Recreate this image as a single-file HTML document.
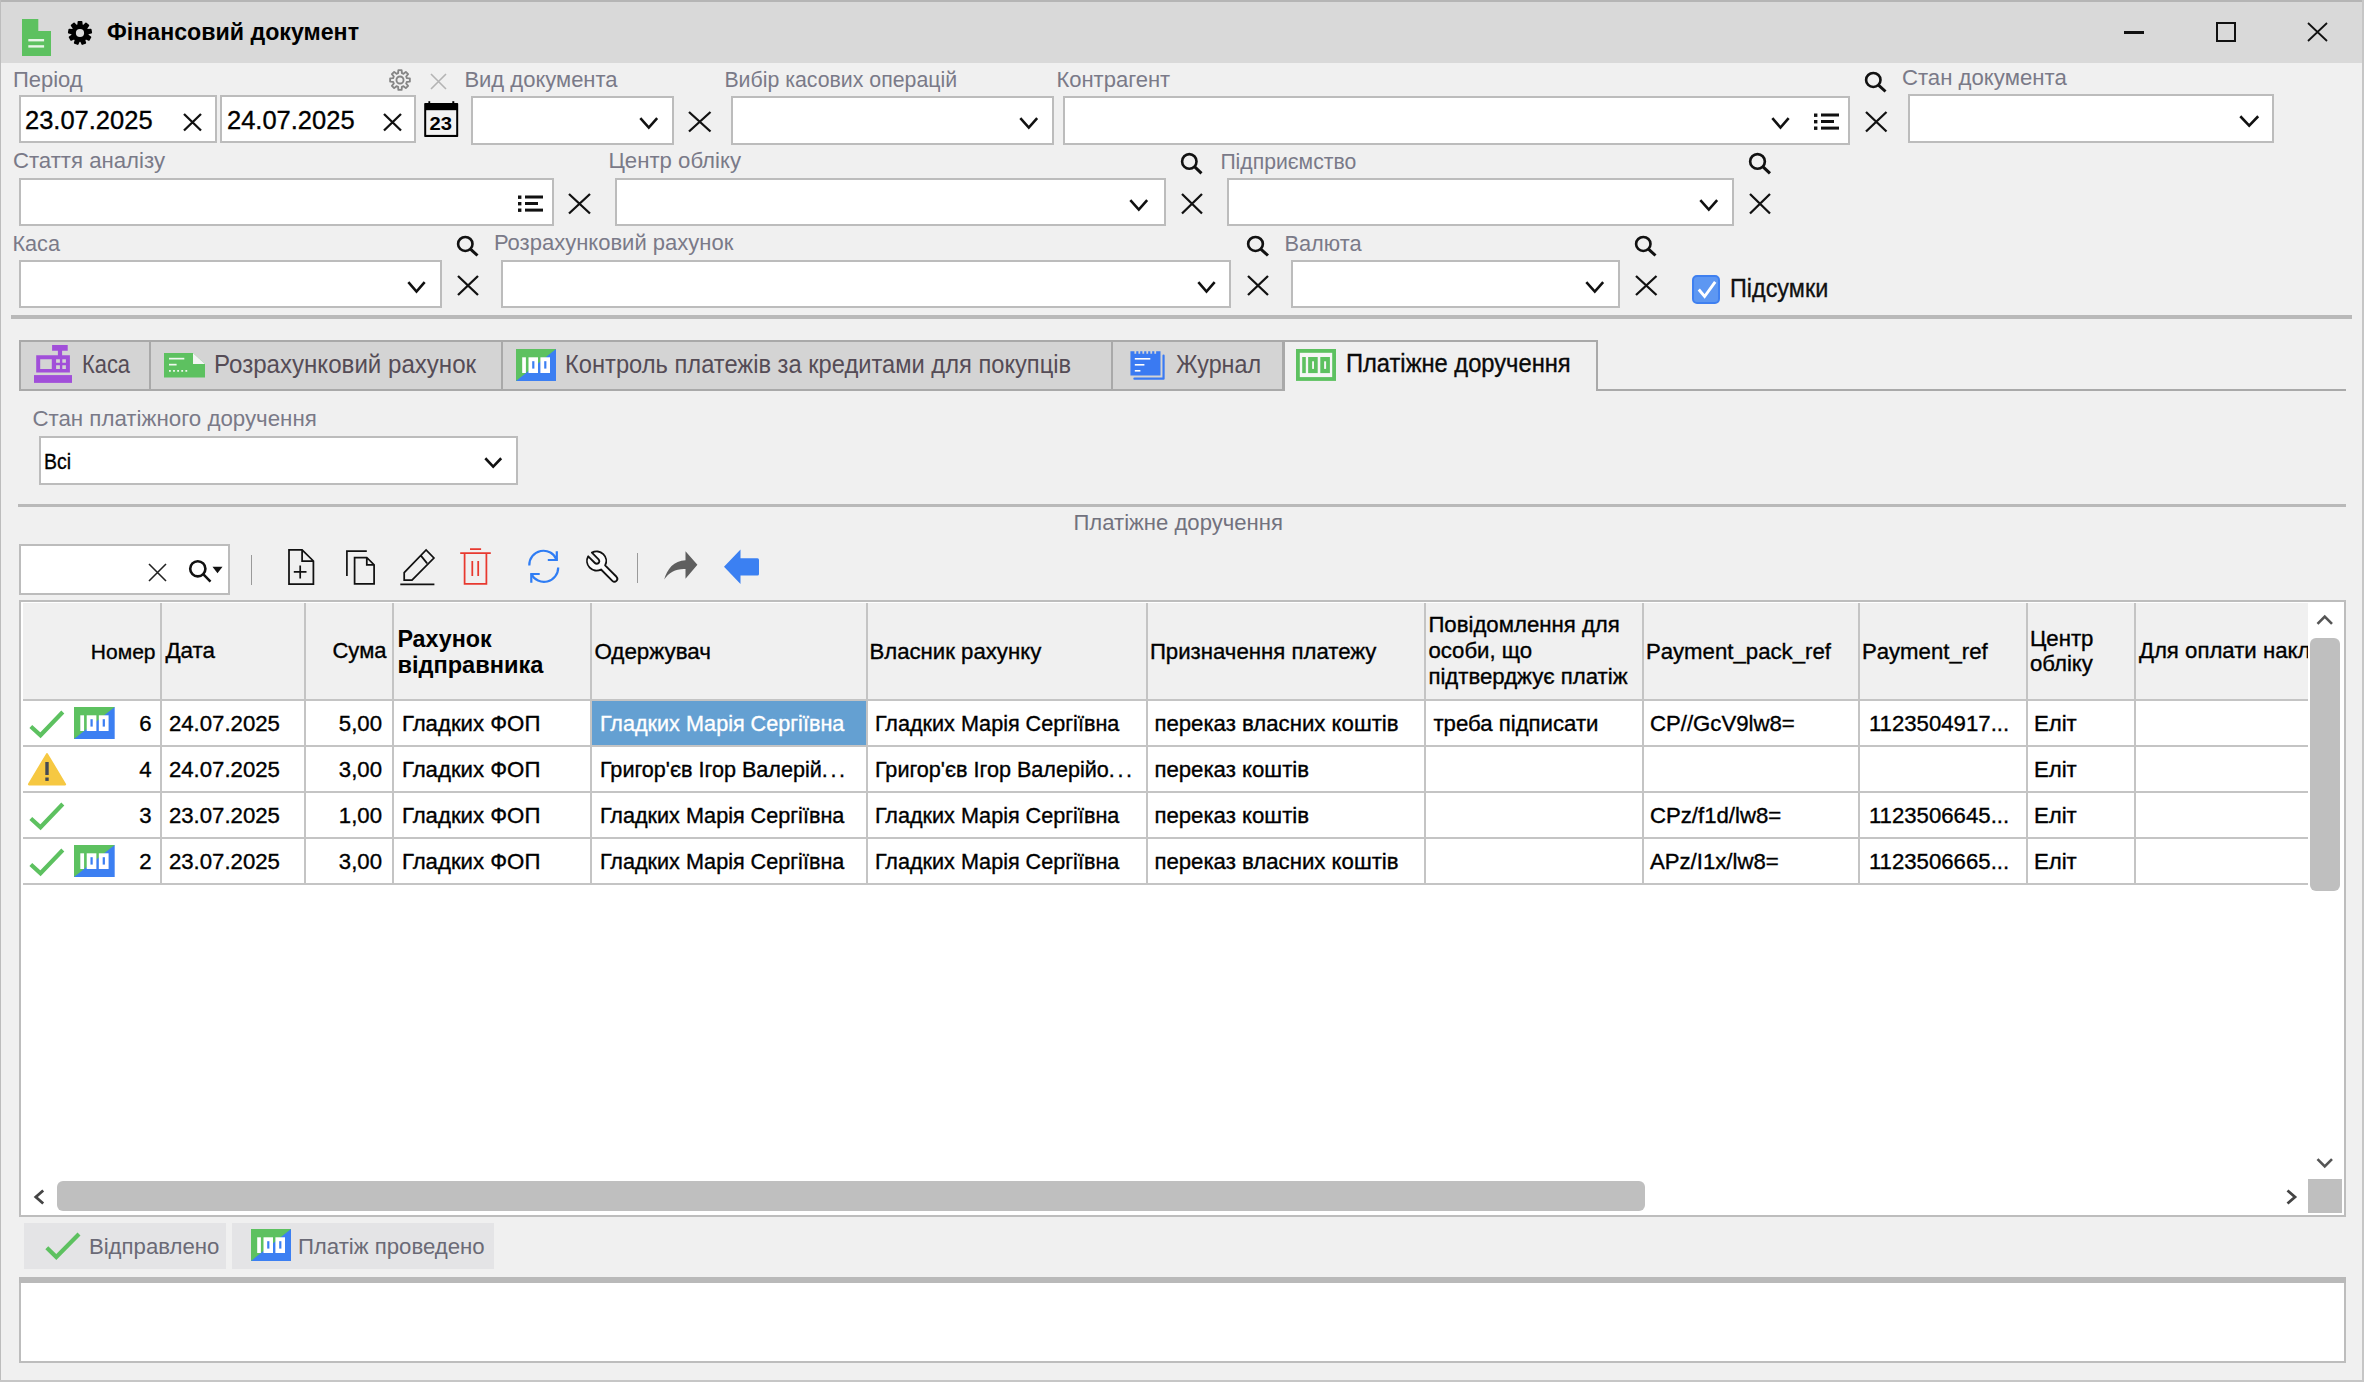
<!DOCTYPE html>
<html><head><meta charset="utf-8"><style>
html,body{margin:0;padding:0;}
body{width:2364px;height:1382px;overflow:hidden;position:relative;background:#f0f0f0;font-family:"Liberation Sans",sans-serif;}
.t{position:absolute;white-space:nowrap;line-height:1;}
.k{-webkit-text-stroke:0.35px currentColor;}
.k2{-webkit-text-stroke:0.15px currentColor;}
.b{position:absolute;box-sizing:border-box;}
svg.b{overflow:visible;}
</style></head><body>

<div class="b" style="left:0.0px;top:0.0px;width:2364.0px;height:63.0px;background:#d9d9d9;"></div>
<div class="b" style="left:0.0px;top:0.0px;width:2364.0px;height:2.0px;background:#b5b5b5;"></div>
<div class="b" style="left:0.0px;top:0.0px;width:1.2px;height:1382.0px;background:#bdbdbd;"></div>
<div class="b" style="left:2362.0px;top:0.0px;width:2.0px;height:1382.0px;background:#c6c6c6;"></div>
<div class="b" style="left:0.0px;top:1380.0px;width:2364.0px;height:2.0px;background:#c6c6c6;"></div>
<svg class="b" style="left:22.0px;top:19.0px;" width="29.0" height="37.0" viewBox="0 0 29 37" preserveAspectRatio="none"><path d="M0 0H16.3V12H29V37H0Z" fill="#5dc160"/><rect x="6.3" y="20" width="15.8" height="2.4" fill="#e8f5e8"/><rect x="6.3" y="26.2" width="15.8" height="2.4" fill="#e8f5e8"/></svg>
<svg class="b" style="left:67.0px;top:20.0px;" width="26.0" height="26.0" viewBox="0 0 26 26" preserveAspectRatio="none"><path d="M11.10 5.23 L11.38 1.82 L14.62 1.82 L14.90 5.23 L16.54 5.83 L18.95 3.39 L21.43 5.48 L19.45 8.27 L20.32 9.78 L23.73 9.46 L24.29 12.65 L20.98 13.52 L20.68 15.24 L23.50 17.19 L21.87 20.00 L18.78 18.53 L17.44 19.65 L18.35 22.95 L15.30 24.06 L13.87 20.95 L12.13 20.95 L10.70 24.06 L7.65 22.95 L8.56 19.65 L7.22 18.53 L4.13 20.00 L2.50 17.19 L5.32 15.24 L5.02 13.52 L1.71 12.65 L2.27 9.46 L5.68 9.78 L6.55 8.27 L4.57 5.48 L7.05 3.39 L9.46 5.83Z" fill="#000" stroke="#000" stroke-width="1.6" stroke-linejoin="round"/><circle cx="13" cy="13" r="8.4" fill="#000"/><circle cx="13" cy="13" r="4.1" fill="#dcdcdc"/></svg>
<div class="t" style="left:107.4px;top:20.2px;font-size:24.3px;color:#000;font-weight:bold;transform:scaleX(0.9547);transform-origin:left center;">Фінансовий документ</div>
<div class="b" style="left:2124.0px;top:31.0px;width:20.0px;height:2.5px;background:#111;"></div>
<div class="b" style="left:2216.0px;top:21.5px;width:20.0px;height:20.0px;border:2.2px solid #111;"></div>
<svg class="b" style="left:2307.0px;top:21.5px;" width="21.0" height="20.0" viewBox="0 0 21.0 20.0" preserveAspectRatio="none"><path d="M1 1L20.0 19.0M20.0 1L1 19.0" stroke="#111" stroke-width="1.8" fill="none"/></svg>
<div class="t" style="left:12.9px;top:68.9px;font-size:22px;color:#7a7a88;font-weight:normal;">Період</div>
<svg class="b" style="left:388.5px;top:69.0px;" width="22.0" height="22.0" viewBox="0 0 26 26" preserveAspectRatio="none"><path d="M21.10 10.76 L24.65 11.10 L24.65 14.90 L21.10 15.24 L20.31 17.14 L22.58 19.89 L19.89 22.58 L17.14 20.31 L15.24 21.10 L14.90 24.65 L11.10 24.65 L10.76 21.10 L8.86 20.31 L6.11 22.58 L3.42 19.89 L5.69 17.14 L4.90 15.24 L1.35 14.90 L1.35 11.10 L4.90 10.76 L5.69 8.86 L3.42 6.11 L6.11 3.42 L8.86 5.69 L10.76 4.90 L11.10 1.35 L14.90 1.35 L15.24 4.90 L17.14 5.69 L19.89 3.42 L22.58 6.11 L20.31 8.86Z" fill="#f0f0f0" stroke="#858585" stroke-width="2.2" stroke-linejoin="round"/><circle cx="13" cy="13" r="4.2" fill="none" stroke="#858585" stroke-width="2.2"/></svg>
<svg class="b" style="left:430.0px;top:73.0px;" width="17.0" height="17.0" viewBox="0 0 17.0 17.0" preserveAspectRatio="none"><path d="M1 1L16.0 16.0M16.0 1L1 16.0" stroke="#b4b4b4" stroke-width="1.6" fill="none"/></svg>
<div class="t" style="left:464.4px;top:68.9px;font-size:22px;color:#7a7a88;font-weight:normal;">Вид документа</div>
<div class="t" style="left:724.4px;top:69.5px;font-size:21.3px;color:#7a7a88;font-weight:normal;">Вибір касових операцій</div>
<div class="t" style="left:1056.4px;top:68.9px;font-size:22px;color:#7a7a88;font-weight:normal;">Контрагент</div>
<svg class="b" style="left:1864.0px;top:70.5px;" width="23.0" height="21.5" viewBox="0 0 23 22" preserveAspectRatio="none"><circle cx="9.3" cy="9.2" r="7.2" stroke="#111" stroke-width="2.6" fill="none"/><path d="M14.5 14.4L21.5 21" stroke="#111" stroke-width="3" fill="none"/></svg>
<div class="t" style="left:1901.9px;top:66.7px;font-size:22.2px;color:#7a7a88;font-weight:normal;">Стан документа</div>
<div class="b" style="left:18.5px;top:95.0px;width:198.0px;height:48.0px;background:#fff;border:2px solid #bcbcbc;"></div>
<div class="t k" style="left:25.4px;top:107.0px;font-size:26.2px;color:#000;font-weight:normal;transform:scaleX(0.9733);transform-origin:left center;">23.07.2025</div>
<svg class="b" style="left:182.5px;top:113.0px;" width="19.0" height="18.5" viewBox="0 0 19.0 18.5" preserveAspectRatio="none"><path d="M1 1L18.0 17.5M18.0 1L1 17.5" stroke="#111" stroke-width="2.3" fill="none"/></svg>
<div class="b" style="left:220.0px;top:95.0px;width:196.0px;height:48.0px;background:#fff;border:2px solid #bcbcbc;"></div>
<div class="t k" style="left:226.9px;top:107.0px;font-size:26.2px;color:#000;font-weight:normal;transform:scaleX(0.9733);transform-origin:left center;">24.07.2025</div>
<svg class="b" style="left:382.5px;top:113.0px;" width="19.0" height="18.5" viewBox="0 0 19.0 18.5" preserveAspectRatio="none"><path d="M1 1L18.0 17.5M18.0 1L1 17.5" stroke="#111" stroke-width="2.3" fill="none"/></svg>
<svg class="b" style="left:424.0px;top:101.0px;" width="34.5" height="36.5" viewBox="0 0 34.5 36.5" preserveAspectRatio="none"><rect x="0.2" y="2.1" width="34" height="34" rx="0.8" fill="#000"/><rect x="2.2" y="9.2" width="30" height="24.7" fill="#f2f2f2"/><rect x="4.4" y="0.2" width="1.8" height="2.5" fill="#000"/><rect x="28.3" y="0.2" width="2" height="2.5" fill="#000"/><text transform="translate(5.6 28.7) scale(1.13 1)" x="0" y="0" font-family="Liberation Sans" font-weight="bold" font-size="17.9" fill="#000">23</text></svg>
<div class="b" style="left:470.5px;top:95.5px;width:203.5px;height:49.0px;background:#fff;border:2px solid #bcbcbc;"></div>
<svg class="b" style="left:640.0px;top:117.5px;" width="17.5" height="11.0" viewBox="0 0 17.5 11.0" preserveAspectRatio="none"><path d="M1.2 1.2L8.8 9.6L16.3 1.2" stroke="#111" stroke-width="2.6" fill="none" stroke-linecap="square"/></svg>
<svg class="b" style="left:688.0px;top:111.0px;" width="23.5" height="21.5" viewBox="0 0 23.5 21.5" preserveAspectRatio="none"><path d="M1 1L22.5 20.5M22.5 1L1 20.5" stroke="#111" stroke-width="2.3" fill="none"/></svg>
<div class="b" style="left:730.5px;top:95.5px;width:323.0px;height:49.0px;background:#fff;border:2px solid #bcbcbc;"></div>
<svg class="b" style="left:1020.0px;top:117.5px;" width="17.5" height="11.0" viewBox="0 0 17.5 11.0" preserveAspectRatio="none"><path d="M1.2 1.2L8.8 9.6L16.3 1.2" stroke="#111" stroke-width="2.6" fill="none" stroke-linecap="square"/></svg>
<div class="b" style="left:1062.5px;top:95.5px;width:787.5px;height:49.0px;background:#fff;border:2px solid #bcbcbc;"></div>
<svg class="b" style="left:1772.0px;top:117.5px;" width="17.0" height="11.0" viewBox="0 0 17.0 11.0" preserveAspectRatio="none"><path d="M1.2 1.2L8.5 9.6L15.8 1.2" stroke="#111" stroke-width="2.6" fill="none" stroke-linecap="square"/></svg>
<svg class="b" style="left:1813.5px;top:113.0px;" width="25.0" height="17.0" viewBox="0 0 25 17" preserveAspectRatio="none"><rect x="0" y="0.5" width="3.4" height="3.4" fill="#111"/><rect x="0" y="7" width="3.4" height="3.4" fill="#111"/><rect x="0" y="13.5" width="3.4" height="3.4" fill="#111"/><rect x="7" y="0.5" width="18" height="3" fill="#111"/><rect x="7" y="7" width="13" height="3" fill="#111"/><rect x="7" y="13.6" width="18" height="3" fill="#111"/></svg>
<svg class="b" style="left:1864.5px;top:111.0px;" width="22.5" height="21.5" viewBox="0 0 22.5 21.5" preserveAspectRatio="none"><path d="M1 1L21.5 20.5M21.5 1L1 20.5" stroke="#111" stroke-width="2.3" fill="none"/></svg>
<div class="b" style="left:1908.0px;top:94.0px;width:365.5px;height:48.5px;background:#fff;border:2px solid #bcbcbc;"></div>
<svg class="b" style="left:2239.5px;top:115.5px;" width="18.5" height="11.0" viewBox="0 0 18.5 11.0" preserveAspectRatio="none"><path d="M1.2 1.2L9.2 9.6L17.3 1.2" stroke="#111" stroke-width="2.6" fill="none" stroke-linecap="square"/></svg>
<div class="t" style="left:12.9px;top:150.2px;font-size:22.2px;color:#7a7a88;font-weight:normal;">Стаття аналізу</div>
<div class="t" style="left:608.4px;top:150.2px;font-size:22.2px;color:#7a7a88;font-weight:normal;">Центр обліку</div>
<svg class="b" style="left:1180.0px;top:152.0px;" width="23.0" height="22.5" viewBox="0 0 23 22" preserveAspectRatio="none"><circle cx="9.3" cy="9.2" r="7.2" stroke="#111" stroke-width="2.6" fill="none"/><path d="M14.5 14.4L21.5 21" stroke="#111" stroke-width="3" fill="none"/></svg>
<div class="t" style="left:1220.4px;top:151.0px;font-size:21.2px;color:#7a7a88;font-weight:normal;">Підприємство</div>
<svg class="b" style="left:1747.5px;top:152.0px;" width="23.5" height="22.5" viewBox="0 0 23 22" preserveAspectRatio="none"><circle cx="9.3" cy="9.2" r="7.2" stroke="#111" stroke-width="2.6" fill="none"/><path d="M14.5 14.4L21.5 21" stroke="#111" stroke-width="3" fill="none"/></svg>
<div class="b" style="left:18.5px;top:178.0px;width:535.0px;height:48.0px;background:#fff;border:2px solid #bcbcbc;"></div>
<svg class="b" style="left:518.0px;top:195.0px;" width="25.0" height="17.0" viewBox="0 0 25 17" preserveAspectRatio="none"><rect x="0" y="0.5" width="3.4" height="3.4" fill="#111"/><rect x="0" y="7" width="3.4" height="3.4" fill="#111"/><rect x="0" y="13.5" width="3.4" height="3.4" fill="#111"/><rect x="7" y="0.5" width="18" height="3" fill="#111"/><rect x="7" y="7" width="13" height="3" fill="#111"/><rect x="7" y="13.6" width="18" height="3" fill="#111"/></svg>
<svg class="b" style="left:568.0px;top:192.5px;" width="23.0" height="21.5" viewBox="0 0 23.0 21.5" preserveAspectRatio="none"><path d="M1 1L22.0 20.5M22.0 1L1 20.5" stroke="#111" stroke-width="2.3" fill="none"/></svg>
<div class="b" style="left:615.0px;top:178.0px;width:551.0px;height:48.0px;background:#fff;border:2px solid #bcbcbc;"></div>
<svg class="b" style="left:1130.0px;top:199.5px;" width="17.5" height="11.0" viewBox="0 0 17.5 11.0" preserveAspectRatio="none"><path d="M1.2 1.2L8.8 9.6L16.3 1.2" stroke="#111" stroke-width="2.6" fill="none" stroke-linecap="square"/></svg>
<svg class="b" style="left:1181.0px;top:193.0px;" width="22.0" height="21.5" viewBox="0 0 22.0 21.5" preserveAspectRatio="none"><path d="M1 1L21.0 20.5M21.0 1L1 20.5" stroke="#111" stroke-width="2.3" fill="none"/></svg>
<div class="b" style="left:1226.5px;top:178.0px;width:507.0px;height:48.0px;background:#fff;border:2px solid #bcbcbc;"></div>
<svg class="b" style="left:1700.0px;top:199.5px;" width="17.5" height="11.0" viewBox="0 0 17.5 11.0" preserveAspectRatio="none"><path d="M1.2 1.2L8.8 9.6L16.3 1.2" stroke="#111" stroke-width="2.6" fill="none" stroke-linecap="square"/></svg>
<svg class="b" style="left:1748.5px;top:193.0px;" width="22.0" height="21.5" viewBox="0 0 22.0 21.5" preserveAspectRatio="none"><path d="M1 1L21.0 20.5M21.0 1L1 20.5" stroke="#111" stroke-width="2.3" fill="none"/></svg>
<div class="t" style="left:12.4px;top:232.6px;font-size:21.7px;color:#7a7a88;font-weight:normal;">Каса</div>
<svg class="b" style="left:456.0px;top:234.5px;" width="23.0" height="21.5" viewBox="0 0 23 22" preserveAspectRatio="none"><circle cx="9.3" cy="9.2" r="7.2" stroke="#111" stroke-width="2.6" fill="none"/><path d="M14.5 14.4L21.5 21" stroke="#111" stroke-width="3" fill="none"/></svg>
<div class="t" style="left:493.9px;top:232.4px;font-size:22px;color:#7a7a88;font-weight:normal;">Розрахунковий рахунок</div>
<svg class="b" style="left:1246.0px;top:234.5px;" width="23.5" height="21.5" viewBox="0 0 23 22" preserveAspectRatio="none"><circle cx="9.3" cy="9.2" r="7.2" stroke="#111" stroke-width="2.6" fill="none"/><path d="M14.5 14.4L21.5 21" stroke="#111" stroke-width="3" fill="none"/></svg>
<div class="t" style="left:1284.4px;top:232.5px;font-size:21.8px;color:#7a7a88;font-weight:normal;">Валюта</div>
<svg class="b" style="left:1634.0px;top:234.5px;" width="23.0" height="21.5" viewBox="0 0 23 22" preserveAspectRatio="none"><circle cx="9.3" cy="9.2" r="7.2" stroke="#111" stroke-width="2.6" fill="none"/><path d="M14.5 14.4L21.5 21" stroke="#111" stroke-width="3" fill="none"/></svg>
<div class="b" style="left:18.5px;top:260.0px;width:423.0px;height:48.0px;background:#fff;border:2px solid #bcbcbc;"></div>
<svg class="b" style="left:408.0px;top:281.5px;" width="17.0" height="11.0" viewBox="0 0 17.0 11.0" preserveAspectRatio="none"><path d="M1.2 1.2L8.5 9.6L15.8 1.2" stroke="#111" stroke-width="2.6" fill="none" stroke-linecap="square"/></svg>
<svg class="b" style="left:457.0px;top:275.0px;" width="22.0" height="21.0" viewBox="0 0 22.0 21.0" preserveAspectRatio="none"><path d="M1 1L21.0 20.0M21.0 1L1 20.0" stroke="#111" stroke-width="2.3" fill="none"/></svg>
<div class="b" style="left:500.5px;top:260.0px;width:730.5px;height:48.0px;background:#fff;border:2px solid #bcbcbc;"></div>
<svg class="b" style="left:1198.0px;top:281.5px;" width="17.0" height="11.0" viewBox="0 0 17.0 11.0" preserveAspectRatio="none"><path d="M1.2 1.2L8.5 9.6L15.8 1.2" stroke="#111" stroke-width="2.6" fill="none" stroke-linecap="square"/></svg>
<svg class="b" style="left:1247.0px;top:275.0px;" width="22.0" height="21.0" viewBox="0 0 22.0 21.0" preserveAspectRatio="none"><path d="M1 1L21.0 20.0M21.0 1L1 20.0" stroke="#111" stroke-width="2.3" fill="none"/></svg>
<div class="b" style="left:1290.5px;top:260.0px;width:329.0px;height:48.0px;background:#fff;border:2px solid #bcbcbc;"></div>
<svg class="b" style="left:1585.5px;top:281.5px;" width="17.5" height="11.0" viewBox="0 0 17.5 11.0" preserveAspectRatio="none"><path d="M1.2 1.2L8.8 9.6L16.3 1.2" stroke="#111" stroke-width="2.6" fill="none" stroke-linecap="square"/></svg>
<svg class="b" style="left:1634.5px;top:275.0px;" width="22.5" height="21.0" viewBox="0 0 22.5 21.0" preserveAspectRatio="none"><path d="M1 1L21.5 20.0M21.5 1L1 20.0" stroke="#111" stroke-width="2.3" fill="none"/></svg>
<div class="b" style="left:1691.5px;top:275.0px;width:28.5px;height:28.5px;background:#5d97f2;border:2px solid #3f80f0;border-radius:5px;"></div>
<svg class="b" style="left:1691.5px;top:275.0px;" width="28.5" height="28.5" viewBox="0 0 28.5 28.5" preserveAspectRatio="none"><path d="M6.8 14.5L12.6 21.5L23.2 6.8" stroke="#fff" stroke-width="2.9" fill="none"/></svg>
<div class="t k" style="left:1729.9px;top:275.1px;font-size:26.5px;color:#111;font-weight:normal;transform:scaleX(0.8830);transform-origin:left center;">Підсумки</div>
<div class="b" style="left:10.5px;top:315.0px;width:2341.5px;height:4.0px;background:#b9b9b9;"></div>
<div class="b" style="left:1596.0px;top:388.5px;width:750.0px;height:2.5px;background:#a9a9a9;"></div>
<div class="b" style="left:18.5px;top:339.5px;width:132.5px;height:51.5px;background:#d4d4d4;border:2px solid #a9a9a9;"></div>
<div class="b" style="left:149.0px;top:339.5px;width:354.0px;height:51.5px;background:#d4d4d4;border:2px solid #a9a9a9;"></div>
<div class="b" style="left:501.0px;top:339.5px;width:612.0px;height:51.5px;background:#d4d4d4;border:2px solid #a9a9a9;"></div>
<div class="b" style="left:1111.0px;top:339.5px;width:173.0px;height:51.5px;background:#d4d4d4;border:2px solid #a9a9a9;"></div>
<div class="b" style="left:1282.5px;top:339.5px;width:315.5px;height:51.5px;background:#f0f0f0;border:2px solid #a9a9a9;border-bottom:none;"></div>
<svg class="b" style="left:34.3px;top:345.2px;" width="38.0" height="37.9" viewBox="0 0 38 37.9" preserveAspectRatio="none"><path fill="#a14fd9" fill-rule="evenodd" d="M18.1 0H33.7V5.7H28.1V10.2H35.9V27.5H2.2V10.2H23.9V5.7H18.1Z M6.2 14.3V23.9H17.8V14.3Z M22.1 14.3V17.8H25.9V14.3Z M28.3 14.3V17.8H31.9V14.3Z M22.1 20.3V23.9H25.9V20.3Z M28.3 20.3V23.9H31.9V20.3Z"/><rect x="0" y="30.1" width="38" height="7.8" fill="#a14fd9"/></svg>
<div class="t" style="left:81.9px;top:351.5px;font-size:25.4px;color:#554c56;font-weight:normal;transform:scaleX(0.8622);transform-origin:left center;">Каса</div>
<svg class="b" style="left:163.5px;top:352.5px;" width="41.0" height="24.5" viewBox="0 0 41 24.5" preserveAspectRatio="none"><path d="M0 0H29L41 11V24.5H0Z" fill="#5dc160"/><path d="M29 0L41 11H29Z" fill="#f4f4f4"/><rect x="5" y="4.8" width="15.3" height="1.7" fill="#eef8ee"/><rect x="5" y="10.8" width="7.6" height="1.7" fill="#eef8ee"/><path d="M5 17.8h1.8M9.1 17.8h1.8M13.2 17.8h1.8M17.3 17.8h1.8M21.4 17.8h1.8" stroke="#eef8ee" stroke-width="1.8"/></svg>
<div class="t" style="left:213.9px;top:351.5px;font-size:25.4px;color:#554c56;font-weight:normal;transform:scaleX(0.9488);transform-origin:left center;">Розрахунковий рахунок</div>
<svg class="b" style="left:516.0px;top:349.0px;" width="40.0" height="32.0" viewBox="0 0 40 32" preserveAspectRatio="none"><rect x="0" y="0" width="40" height="32" fill="#3c7ff2"/><path d="M0 0H40L0 32Z" fill="#5dc160"/><rect x="6.2" y="8.3" width="3.7" height="15.7" fill="#fff"/><rect x="12.5" y="8.3" width="9.5" height="15.7" fill="#fff"/><rect x="16.2" y="12.2" width="2.2" height="7.4" fill="#3c7ff2"/><rect x="24.4" y="8.3" width="9.6" height="15.7" fill="#fff"/><rect x="28.2" y="12.2" width="2.2" height="7.4" fill="#3c7ff2"/></svg>
<div class="t" style="left:565.4px;top:351.5px;font-size:25.4px;color:#554c56;font-weight:normal;transform:scaleX(0.9331);transform-origin:left center;">Контроль платежів за кредитами для покупців</div>
<svg class="b" style="left:1129.5px;top:350.5px;" width="35.0" height="29.5" viewBox="0 0 35 29.5" preserveAspectRatio="none"><path d="M0.45 0.35H4.43V2.7H6.24V0.35H8.41V2.7H10.22V0.35H12.39V2.7H14.2V0.35H16.37V2.7H18.18V0.35H20.35V2.7H22.16V0.35H24.33V2.7H26.14V0.35H30.5V24.4H0.45Z" fill="#3a7af2"/><path d="M33.55 4.5V27.7H4.4" stroke="#3a7af2" stroke-width="2.2" fill="none" stroke-linecap="round" stroke-linejoin="round"/><rect x="4.8" y="7" width="15.5" height="1.6" fill="#fff"/><rect x="4.8" y="13" width="9.6" height="1.6" fill="#fff"/><rect x="4.8" y="19" width="5.6" height="1.6" fill="#fff"/></svg>
<div class="t" style="left:1175.9px;top:351.5px;font-size:25.4px;color:#554c56;font-weight:normal;transform:scaleX(0.9173);transform-origin:left center;">Журнал</div>
<svg class="b" style="left:1296.0px;top:349.0px;" width="40.0" height="32.0" viewBox="0 0 40 32" preserveAspectRatio="none"><rect x="1.9" y="1.9" width="36.2" height="28.1" fill="#f6f6f6" stroke="#5dc160" stroke-width="3.8"/><rect x="6.2" y="8" width="3.6" height="16.1" fill="#5dc160"/><rect x="12.15" y="8" width="9.55" height="16.1" fill="#5dc160"/><rect x="16.1" y="12.3" width="1.9" height="7.6" fill="#f6f6f6"/><rect x="24.3" y="8" width="9.6" height="16.1" fill="#5dc160"/><rect x="28.1" y="12.3" width="2.0" height="7.6" fill="#f6f6f6"/></svg>
<div class="t k" style="left:1345.9px;top:351.2px;font-size:25.8px;color:#0a0a0a;font-weight:normal;transform:scaleX(0.9186);transform-origin:left center;">Платіжне доручення</div>
<div class="t" style="left:32.4px;top:407.9px;font-size:22.3px;color:#7a7a88;font-weight:normal;">Стан платіжного доручення</div>
<div class="b" style="left:38.5px;top:435.5px;width:479.5px;height:49.0px;background:#fff;border:2px solid #bcbcbc;"></div>
<div class="t k" style="left:43.9px;top:449.5px;font-size:22.8px;color:#000;font-weight:normal;transform:scaleX(0.8553);transform-origin:left center;">Всі</div>
<svg class="b" style="left:485.0px;top:458.0px;" width="16.5" height="10.0" viewBox="0 0 16.5 10.0" preserveAspectRatio="none"><path d="M1.2 1.2L8.2 8.6L15.3 1.2" stroke="#111" stroke-width="2.6" fill="none" stroke-linecap="square"/></svg>
<div class="b" style="left:18.0px;top:503.5px;width:2328.0px;height:3.5px;background:#b9b9b9;"></div>
<div class="t" style="left:1178.2px;top:512.3px;font-size:22.1px;color:#72727e;font-weight:normal;transform:translateX(-50%);">Платіжне доручення</div>
<div class="b" style="left:18.5px;top:543.5px;width:211.3px;height:51.5px;background:#fff;border:2px solid #bcbcbc;"></div>
<svg class="b" style="left:148.0px;top:562.5px;" width="19.0" height="19.0" viewBox="0 0 19.0 19.0" preserveAspectRatio="none"><path d="M1 1L18.0 18.0M18.0 1L1 18.0" stroke="#222" stroke-width="1.6" fill="none"/></svg>
<svg class="b" style="left:188.0px;top:559.0px;" width="35.0" height="24.0" viewBox="0 0 35 24" preserveAspectRatio="none"><circle cx="9.8" cy="9.8" r="7.6" stroke="#111" stroke-width="2.6" fill="none"/><path d="M15.2 15.2L22.5 22.7" stroke="#111" stroke-width="2.5" fill="none"/><path d="M24.5 7.7H34.5L29.5 14.3Z" fill="#111"/></svg>
<div class="b" style="left:250.5px;top:555.0px;width:1.7px;height:30.0px;background:#9a9a9a;"></div>
<div class="b" style="left:636.8px;top:552.5px;width:1.7px;height:30.0px;background:#9a9a9a;"></div>
<svg class="b" style="left:288.0px;top:548.5px;" width="26.5" height="36.5" viewBox="0 0 26.5 36.5" preserveAspectRatio="none"><path d="M1 0.9H14.1L25.4 12V35.2H1Z M14.1 0.9V12H25.4" stroke="#111" stroke-width="1.75" fill="none" stroke-linejoin="miter"/><path d="M5.8 22.8H18.5M12.2 16.6V29.4" stroke="#111" stroke-width="1.7" fill="none"/></svg>
<svg class="b" style="left:345.5px;top:550.0px;" width="29.5" height="35.0" viewBox="0 0 29.5 35" preserveAspectRatio="none"><path d="M0.9 26V1.2H20.8" stroke="#111" stroke-width="1.7" fill="none"/><path d="M8.6 7.5H20.8L28.1 14.8V33.8H8.6Z M20.8 7.5V14.8H28.1" stroke="#111" stroke-width="1.75" fill="none"/></svg>
<svg class="b" style="left:400.0px;top:548.5px;" width="35.0" height="36.5" viewBox="0 0 35 36.5" preserveAspectRatio="none"><path d="M4.2 31V23.6L26.1 0.9L33.9 9L12 31Z M21.3 7.1L27.1 14.4" stroke="#111" stroke-width="1.75" fill="none" stroke-linejoin="miter"/><path d="M0.3 35.3H34.4" stroke="#111" stroke-width="1.8"/></svg>
<svg class="b" style="left:460.0px;top:548.0px;" width="31.0" height="37.0" viewBox="0 0 31 37" preserveAspectRatio="none"><path d="M10 1.2H21.1M0.2 5.1H30.8M4.6 5.1V35.8H26.4V5.1M12.3 12.9V28M18.2 12.9V28" stroke="#e8392f" stroke-width="1.75" fill="none"/></svg>
<svg class="b" style="left:527.5px;top:549.5px;" width="31.5" height="33.5" viewBox="0 0 31.5 33.5" preserveAspectRatio="none"><path d="M1.3 15.5A14.2 14.2 0 0 1 28.8 10M30.2 17.5A14.2 14.2 0 0 1 3.3 24" stroke="#2f7df4" stroke-width="2.2" fill="none"/><path d="M19.8 10H28.8V1.3" stroke="#2f7df4" stroke-width="2.2" fill="none"/><path d="M11.7 24H3.3V32.8" stroke="#2f7df4" stroke-width="2.2" fill="none"/></svg>
<svg class="b" style="left:585.5px;top:550.0px;" width="32.0" height="33.0" viewBox="0 0 32 33" preserveAspectRatio="none"><path d="M5.90 2.63L12.58 9.30A2.6 2.6 0 0 1 8.90 12.98L2.23 6.30A9.6 9.6 0 0 0 15.02 19.52L26.37 30.87A2.9 2.9 0 0 0 30.47 26.77L19.12 15.42A9.6 9.6 0 0 0 5.90 2.63Z" stroke="#111" stroke-width="1.85" fill="#fafafa" stroke-linejoin="round"/></svg>
<svg class="b" style="left:663.0px;top:550.5px;" width="35.5" height="29.0" viewBox="0 0 35.5 29" preserveAspectRatio="none"><path d="M1.2 28.5C4 18 11 9.5 22.5 9.2V0.3L34.4 13.8L22.5 27.7V18C13 17.5 6 21.5 1.2 28.5Z" fill="#5f5f5f"/></svg>
<svg class="b" style="left:723.5px;top:549.0px;" width="35.0" height="35.5" viewBox="0 0 35 35.5" preserveAspectRatio="none"><path d="M0 17.75L16.5 0.5V9.3H33.5Q35 9.3 35 11V25Q35 26.5 33.5 26.5H16.5V35Z" fill="#3b80f2"/></svg>
<div class="b" style="left:18.5px;top:599.5px;width:2327.5px;height:617.5px;background:#fff;border:2px solid #bdbdbd;"></div>
<div class="b" style="left:22.5px;top:603.0px;width:2285.5px;height:97.0px;background:#f0f0f0;"></div>
<div class="b" style="left:22.5px;top:699.0px;width:2285.5px;height:2.0px;background:#c4c4c4;"></div>
<div class="b" style="left:160.0px;top:603.0px;width:2.0px;height:282.0px;background:#c4c4c4;"></div>
<div class="b" style="left:304.2px;top:603.0px;width:2.0px;height:282.0px;background:#c4c4c4;"></div>
<div class="b" style="left:392.0px;top:603.0px;width:2.0px;height:282.0px;background:#c4c4c4;"></div>
<div class="b" style="left:590.2px;top:603.0px;width:2.0px;height:282.0px;background:#c4c4c4;"></div>
<div class="b" style="left:866.0px;top:603.0px;width:2.0px;height:282.0px;background:#c4c4c4;"></div>
<div class="b" style="left:1146.0px;top:603.0px;width:2.0px;height:282.0px;background:#c4c4c4;"></div>
<div class="b" style="left:1424.0px;top:603.0px;width:2.0px;height:282.0px;background:#c4c4c4;"></div>
<div class="b" style="left:1641.5px;top:603.0px;width:2.0px;height:282.0px;background:#c4c4c4;"></div>
<div class="b" style="left:1858.0px;top:603.0px;width:2.0px;height:282.0px;background:#c4c4c4;"></div>
<div class="b" style="left:2026.0px;top:603.0px;width:2.0px;height:282.0px;background:#c4c4c4;"></div>
<div class="b" style="left:2134.0px;top:603.0px;width:2.0px;height:282.0px;background:#c4c4c4;"></div>
<div class="b" style="left:22.5px;top:745.0px;width:2285.5px;height:2.0px;background:#c4c4c4;"></div>
<div class="b" style="left:22.5px;top:791.0px;width:2285.5px;height:2.0px;background:#c4c4c4;"></div>
<div class="b" style="left:22.5px;top:837.0px;width:2285.5px;height:2.0px;background:#c4c4c4;"></div>
<div class="b" style="left:22.5px;top:883.0px;width:2285.5px;height:2.0px;background:#c4c4c4;"></div>
<div class="b" style="left:592.0px;top:701.0px;width:274.0px;height:44.0px;background:#64a0d2;"></div>
<div class="t k" style="left:-1044.5px;width:1200px;text-align:right;top:640.9px;font-size:21px;color:#000;font-weight:normal;">Номер</div>
<div class="t k" style="left:165.4px;top:639.7px;font-size:22.4px;color:#000;font-weight:normal;">Дата</div>
<div class="t k" style="left:-813.5px;width:1200px;text-align:right;top:640.1px;font-size:22px;color:#000;font-weight:normal;">Сума</div>
<div class="t" style="left:397.4px;top:628.3px;font-size:23.3px;color:#000;font-weight:bold;">Рахунок</div>
<div class="t" style="left:397.4px;top:653.5px;font-size:23.6px;color:#000;font-weight:bold;">відправника</div>
<div class="t k" style="left:594.4px;top:640.5px;font-size:22.4px;color:#000;font-weight:normal;">Одержувач</div>
<div class="t k" style="left:869.4px;top:640.7px;font-size:22.2px;color:#000;font-weight:normal;">Власник рахунку</div>
<div class="t k" style="left:1149.9px;top:640.7px;font-size:22.2px;color:#000;font-weight:normal;">Призначення платежу</div>
<div class="t k" style="left:1428.4px;top:613.7px;font-size:22.2px;color:#000;font-weight:normal;">Повідомлення для</div>
<div class="t k" style="left:1428.4px;top:639.5px;font-size:22.2px;color:#000;font-weight:normal;">особи, що</div>
<div class="t k" style="left:1428.4px;top:665.7px;font-size:22.2px;color:#000;font-weight:normal;">підтверджує платіж</div>
<div class="t k" style="left:1645.9px;top:640.5px;font-size:22.2px;color:#000;font-weight:normal;">Payment_pack_ref</div>
<div class="t k" style="left:1861.9px;top:640.5px;font-size:22.2px;color:#000;font-weight:normal;">Payment_ref</div>
<div class="t k" style="left:2029.9px;top:628.1px;font-size:22.2px;color:#000;font-weight:normal;">Центр</div>
<div class="t k" style="left:2029.9px;top:653.2px;font-size:22.2px;color:#000;font-weight:normal;">обліку</div>
<div class="b" style="left:2138px;top:603px;width:170px;height:96px;overflow:hidden;">
<div class="t k" style="left:0.9px;top:37.4px;font-size:22.2px;color:#000;font-weight:normal;">Для оплати накладної</div>
</div>
<svg class="b" style="left:28.7px;top:709.7px;" width="35.5" height="27.5" viewBox="0 0 35.5 27.5" preserveAspectRatio="none"><path d="M1.8 16.5L11.5 25.3L33.8 2" stroke="#5dc160" stroke-width="4.2" fill="none"/></svg>
<svg class="b" style="left:74.0px;top:707.0px;" width="40.7" height="32.0" viewBox="0 0 40 32" preserveAspectRatio="none"><rect x="0" y="0" width="40" height="32" fill="#3c7ff2"/><path d="M0 0H40L0 32Z" fill="#5dc160"/><rect x="6.2" y="8.3" width="3.7" height="15.7" fill="#fff"/><rect x="12.5" y="8.3" width="9.5" height="15.7" fill="#fff"/><rect x="16.2" y="12.2" width="2.2" height="7.4" fill="#3c7ff2"/><rect x="24.4" y="8.3" width="9.6" height="15.7" fill="#fff"/><rect x="28.2" y="12.2" width="2.2" height="7.4" fill="#3c7ff2"/></svg>
<div class="t k" style="left:-1048.5px;width:1200px;text-align:right;top:712.5px;font-size:22.2px;color:#000;font-weight:normal;">6</div>
<div class="t k" style="left:168.9px;top:712.5px;font-size:22.2px;color:#000;font-weight:normal;">24.07.2025</div>
<div class="t k" style="left:-818.0px;width:1200px;text-align:right;top:712.5px;font-size:22.2px;color:#000;font-weight:normal;">5,00</div>
<div class="t k" style="left:401.9px;top:712.5px;font-size:22.2px;color:#000;font-weight:normal;">Гладких ФОП</div>
<div class="t k" style="left:599.9px;top:713.0px;font-size:21.6px;color:#fff;font-weight:normal;">Гладких Марія Сергіївна</div>
<div class="t k" style="left:874.9px;top:713.0px;font-size:21.6px;color:#000;font-weight:normal;">Гладких Марія Сергіївна</div>
<div class="t k" style="left:1154.4px;top:712.5px;font-size:22.2px;color:#000;font-weight:normal;">переказ власних коштів</div>
<div class="t k" style="left:1433.4px;top:712.5px;font-size:22.2px;color:#000;font-weight:normal;">треба підписати</div>
<div class="t k" style="left:1649.9px;top:712.5px;font-size:22.2px;color:#000;font-weight:normal;">CP//GcV9lw8=</div>
<div class="t k" style="left:1868.9px;top:712.5px;font-size:22.2px;color:#000;font-weight:normal;">1123504917...</div>
<div class="t k" style="left:2033.9px;top:712.5px;font-size:22.2px;color:#000;font-weight:normal;">Еліт</div>
<svg class="b" style="left:27.5px;top:752.5px;" width="38.0" height="32.5" viewBox="0 0 38 32.5" preserveAspectRatio="none"><path d="M19 1.2L37 31.3H1Z" fill="#f6c842" stroke="#f6c842" stroke-width="2.2" stroke-linejoin="round"/><rect x="17.3" y="9" width="3.4" height="13" fill="#444a55"/><rect x="17.3" y="24.5" width="3.4" height="3.4" fill="#444a55"/></svg>
<div class="t k" style="left:-1048.5px;width:1200px;text-align:right;top:758.5px;font-size:22.2px;color:#000;font-weight:normal;">4</div>
<div class="t k" style="left:168.9px;top:758.5px;font-size:22.2px;color:#000;font-weight:normal;">24.07.2025</div>
<div class="t k" style="left:-818.0px;width:1200px;text-align:right;top:758.5px;font-size:22.2px;color:#000;font-weight:normal;">3,00</div>
<div class="t k" style="left:401.9px;top:758.5px;font-size:22.2px;color:#000;font-weight:normal;">Гладких ФОП</div>
<div class="t k" style="left:599.9px;top:759.0px;font-size:21.6px;color:#000;font-weight:normal;">Григор'єв Ігор Валерій<span style='letter-spacing:2.6px'>...</span></div>
<div class="t k" style="left:874.9px;top:759.0px;font-size:21.6px;color:#000;font-weight:normal;">Григор'єв Ігор Валерійо<span style='letter-spacing:2.6px'>...</span></div>
<div class="t k" style="left:1154.4px;top:758.5px;font-size:22.2px;color:#000;font-weight:normal;">переказ коштів</div>
<div class="t k" style="left:2033.9px;top:758.5px;font-size:22.2px;color:#000;font-weight:normal;">Еліт</div>
<svg class="b" style="left:28.7px;top:801.7px;" width="35.5" height="27.5" viewBox="0 0 35.5 27.5" preserveAspectRatio="none"><path d="M1.8 16.5L11.5 25.3L33.8 2" stroke="#5dc160" stroke-width="4.2" fill="none"/></svg>
<div class="t k" style="left:-1048.5px;width:1200px;text-align:right;top:804.5px;font-size:22.2px;color:#000;font-weight:normal;">3</div>
<div class="t k" style="left:168.9px;top:804.5px;font-size:22.2px;color:#000;font-weight:normal;">23.07.2025</div>
<div class="t k" style="left:-818.0px;width:1200px;text-align:right;top:804.5px;font-size:22.2px;color:#000;font-weight:normal;">1,00</div>
<div class="t k" style="left:401.9px;top:804.5px;font-size:22.2px;color:#000;font-weight:normal;">Гладких ФОП</div>
<div class="t k" style="left:599.9px;top:805.0px;font-size:21.6px;color:#000;font-weight:normal;">Гладких Марія Сергіївна</div>
<div class="t k" style="left:874.9px;top:805.0px;font-size:21.6px;color:#000;font-weight:normal;">Гладких Марія Сергіївна</div>
<div class="t k" style="left:1154.4px;top:804.5px;font-size:22.2px;color:#000;font-weight:normal;">переказ коштів</div>
<div class="t k" style="left:1649.9px;top:804.5px;font-size:22.2px;color:#000;font-weight:normal;">CPz/f1d/lw8=</div>
<div class="t k" style="left:1868.9px;top:804.5px;font-size:22.2px;color:#000;font-weight:normal;">1123506645...</div>
<div class="t k" style="left:2033.9px;top:804.5px;font-size:22.2px;color:#000;font-weight:normal;">Еліт</div>
<svg class="b" style="left:28.7px;top:847.7px;" width="35.5" height="27.5" viewBox="0 0 35.5 27.5" preserveAspectRatio="none"><path d="M1.8 16.5L11.5 25.3L33.8 2" stroke="#5dc160" stroke-width="4.2" fill="none"/></svg>
<svg class="b" style="left:74.0px;top:845.0px;" width="40.7" height="32.0" viewBox="0 0 40 32" preserveAspectRatio="none"><rect x="0" y="0" width="40" height="32" fill="#3c7ff2"/><path d="M0 0H40L0 32Z" fill="#5dc160"/><rect x="6.2" y="8.3" width="3.7" height="15.7" fill="#fff"/><rect x="12.5" y="8.3" width="9.5" height="15.7" fill="#fff"/><rect x="16.2" y="12.2" width="2.2" height="7.4" fill="#3c7ff2"/><rect x="24.4" y="8.3" width="9.6" height="15.7" fill="#fff"/><rect x="28.2" y="12.2" width="2.2" height="7.4" fill="#3c7ff2"/></svg>
<div class="t k" style="left:-1048.5px;width:1200px;text-align:right;top:850.5px;font-size:22.2px;color:#000;font-weight:normal;">2</div>
<div class="t k" style="left:168.9px;top:850.5px;font-size:22.2px;color:#000;font-weight:normal;">23.07.2025</div>
<div class="t k" style="left:-818.0px;width:1200px;text-align:right;top:850.5px;font-size:22.2px;color:#000;font-weight:normal;">3,00</div>
<div class="t k" style="left:401.9px;top:850.5px;font-size:22.2px;color:#000;font-weight:normal;">Гладких ФОП</div>
<div class="t k" style="left:599.9px;top:851.0px;font-size:21.6px;color:#000;font-weight:normal;">Гладких Марія Сергіївна</div>
<div class="t k" style="left:874.9px;top:851.0px;font-size:21.6px;color:#000;font-weight:normal;">Гладких Марія Сергіївна</div>
<div class="t k" style="left:1154.4px;top:850.5px;font-size:22.2px;color:#000;font-weight:normal;">переказ власних коштів</div>
<div class="t k" style="left:1649.9px;top:850.5px;font-size:22.2px;color:#000;font-weight:normal;">APz/I1x/lw8=</div>
<div class="t k" style="left:1868.9px;top:850.5px;font-size:22.2px;color:#000;font-weight:normal;">1123506665...</div>
<div class="t k" style="left:2033.9px;top:850.5px;font-size:22.2px;color:#000;font-weight:normal;">Еліт</div>
<div class="b" style="left:2310.0px;top:637.5px;width:29.5px;height:253.5px;background:#bfbfbf;border-radius:6px;"></div>
<svg class="b" style="left:2316.0px;top:615.0px;" width="17.5" height="10.0" viewBox="0 0 17.5 10" preserveAspectRatio="none"><path d="M1.5 8.8L8.75 1.5L16 8.8" stroke="#555" stroke-width="2.6" fill="none"/></svg>
<svg class="b" style="left:2316.0px;top:1157.5px;" width="17.5" height="10.0" viewBox="0 0 17.5 10" preserveAspectRatio="none"><path d="M1.5 1.2L8.75 8.5L16 1.2" stroke="#555" stroke-width="2.6" fill="none"/></svg>
<div class="b" style="left:56.5px;top:1181.0px;width:1588.5px;height:29.5px;background:#bfbfbf;border-radius:6px;"></div>
<svg class="b" style="left:34.0px;top:1189.0px;" width="10.5" height="16.0" viewBox="0 0 10.5 16" preserveAspectRatio="none"><path d="M9.2 1.5L1.8 8L9.2 14.5" stroke="#444" stroke-width="2.8" fill="none"/></svg>
<svg class="b" style="left:2285.5px;top:1189.0px;" width="11.0" height="16.0" viewBox="0 0 11 16" preserveAspectRatio="none"><path d="M1.5 1.5L9 8L1.5 14.5" stroke="#444" stroke-width="2.8" fill="none"/></svg>
<div class="b" style="left:2308.0px;top:1179.0px;width:34.0px;height:33.5px;background:#bfbfbf;"></div>
<div class="b" style="left:23.5px;top:1222.5px;width:202.5px;height:46.0px;background:#e4e4e6;"></div>
<div class="b" style="left:231.5px;top:1222.5px;width:262.5px;height:46.0px;background:#e4e4e6;"></div>
<svg class="b" style="left:44.5px;top:1232.0px;" width="36.0" height="27.0" viewBox="0 0 36 27" preserveAspectRatio="none"><path d="M1.8 15.8L11.3 25L34 2" stroke="#5dc160" stroke-width="4.2" fill="none"/></svg>
<div class="t" style="left:88.9px;top:1235.9px;font-size:22.2px;color:#6a6a76;font-weight:normal;">Відправлено</div>
<svg class="b" style="left:250.5px;top:1229.0px;" width="40.0" height="32.0" viewBox="0 0 40 32" preserveAspectRatio="none"><rect x="0" y="0" width="40" height="32" fill="#3c7ff2"/><path d="M0 0H40L0 32Z" fill="#5dc160"/><rect x="6.2" y="8.3" width="3.7" height="15.7" fill="#fff"/><rect x="12.5" y="8.3" width="9.5" height="15.7" fill="#fff"/><rect x="16.2" y="12.2" width="2.2" height="7.4" fill="#3c7ff2"/><rect x="24.4" y="8.3" width="9.6" height="15.7" fill="#fff"/><rect x="28.2" y="12.2" width="2.2" height="7.4" fill="#3c7ff2"/></svg>
<div class="t" style="left:297.9px;top:1235.9px;font-size:22.2px;color:#6a6a76;font-weight:normal;">Платіж проведено</div>
<div class="b" style="left:18.5px;top:1277.0px;width:2327.5px;height:6.0px;background:#b9b9b9;"></div>
<div class="b" style="left:18.5px;top:1282.5px;width:2327.5px;height:80.0px;background:#fff;border:2px solid #bdbdbd;border-top:none;"></div>
</body></html>
